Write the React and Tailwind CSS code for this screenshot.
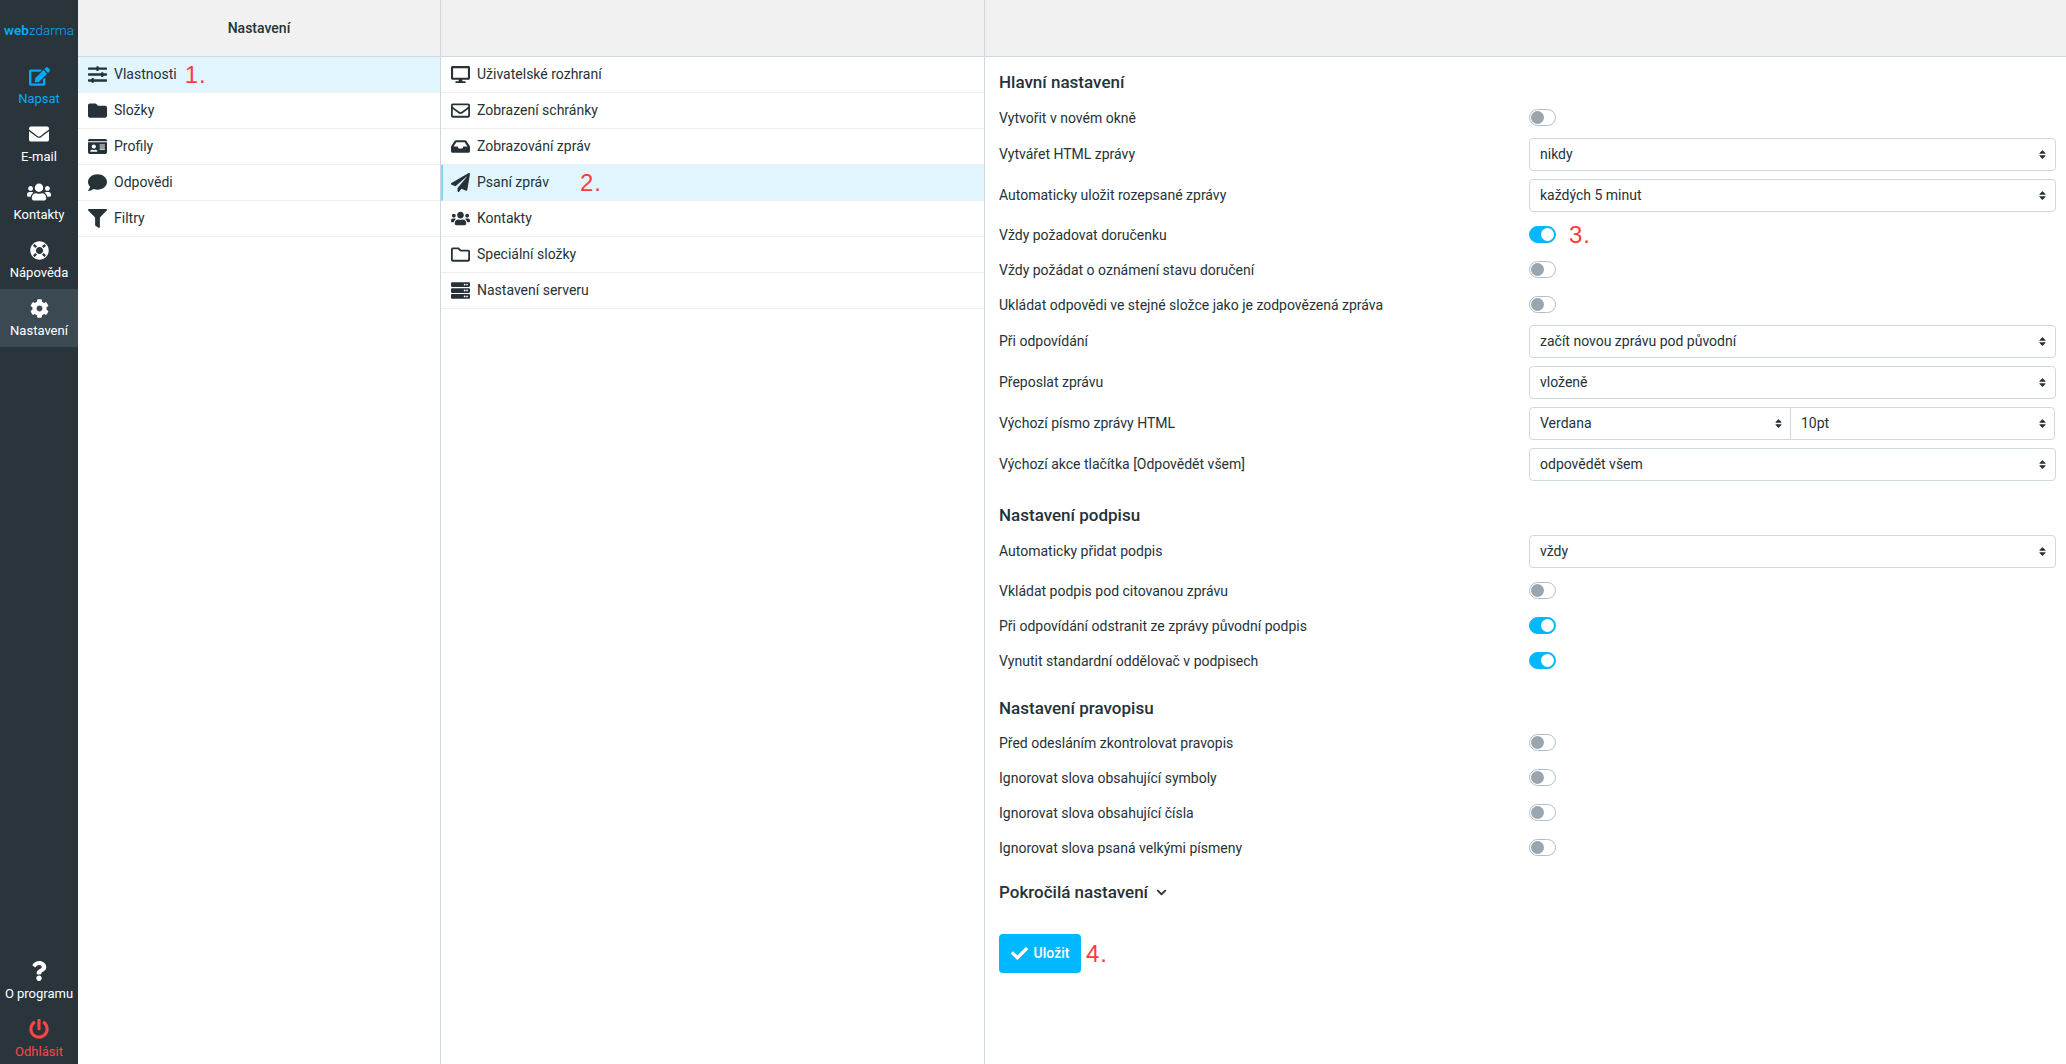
import {
  FaCheck,
  FaChevronDown,
  FaCog,
  FaComment,
  FaDesktop,
  FaEdit,
  FaEnvelope,
  FaFilter,
  FaFolder,
  FaIdCard,
  FaInbox,
  FaLifeRing,
  FaPaperPlane,
  FaPowerOff,
  FaQuestion,
  FaRegEnvelope,
  FaRegFolder,
  FaServer,
  FaSlidersH,
  FaSort,
  FaUsers,
} from "react-icons/fa";

const NavItems = [
  { icon: FaEdit, label: "Napsat", color: "text-[#03a9f4]", size: "text-[21px]" },
  { icon: FaEnvelope, label: "E-mail", size: "text-[20px]" },
  { icon: FaUsers, label: "Kontakty", size: "text-[24px]" },
  { icon: FaLifeRing, label: "Nápověda", size: "text-[19px]" },
  { icon: FaCog, label: "Nastavení", size: "text-[19px]", active: true },
];

const Sections = [
  { icon: FaSlidersH, label: "Vlastnosti", mark: "1.", active: true },
  { icon: FaFolder, label: "Složky" },
  { icon: FaIdCard, label: "Profily" },
  { icon: FaComment, label: "Odpovědi" },
  { icon: FaFilter, label: "Filtry" },
];

const Pages = [
  { icon: FaDesktop, label: "Uživatelské rozhraní" },
  { icon: FaRegEnvelope, label: "Zobrazení schránky" },
  { icon: FaInbox, label: "Zobrazování zpráv" },
  { icon: FaPaperPlane, label: "Psaní zpráv", mark: "2.", active: true },
  { icon: FaUsers, label: "Kontakty" },
  { icon: FaRegFolder, label: "Speciální složky" },
  { icon: FaServer, label: "Nastavení serveru" },
];

function Mark({ children, className = "" }) {
  return (
    <span className={`font-['Liberation_Sans',sans-serif] text-[24px] leading-none tracking-[1px] text-[#ff3b3b] ${className}`}>
      {children}
    </span>
  );
}

function NavItem({ icon: Icon, label, color = "text-white", size = "text-[20px]", active, className = "" }) {
  return (
    <div className={`flex h-[58px] flex-col items-center justify-center ${color} ${active ? "bg-[#3b4a52]" : ""} ${className}`}>
      <div className={`flex h-[26px] items-center ${size}`}>
        <Icon />
      </div>
      <div className="text-[13px] leading-[20px]">{label}</div>
    </div>
  );
}

function ListRow({ icon: Icon, label, mark, active, markClass, accent }) {
  return (
    <div
      className={`flex h-[36px] items-center border-b border-[#eceff1] text-[14px] ${
        active ? "bg-[#e1f5fe]" : ""
      } ${accent && active ? "border-l-2 border-l-[#81d4fa] pl-[7px]" : "pl-[9px]"}`}
    >
      <span className="flex w-[20px] justify-center text-[19px] text-[#263238]">
        <Icon />
      </span>
      <span className="ml-[7px] text-[#263238]">{label}</span>
      {mark && <Mark className={markClass}>{mark}</Mark>}
    </div>
  );
}

function Select({ value, className = "w-full rounded" }) {
  return (
    <div className={`relative ${className}`}>
      <select
        defaultValue={value}
        className={`h-[33px] w-full appearance-none border border-[#cfd8dc] bg-white pl-[10px] text-[14px] text-[#263238] ${className}`}
      >
        <option>{value}</option>
      </select>
      <FaSort className="pointer-events-none absolute top-[11px] right-[8px] text-[11px] text-[#263238]" />
    </div>
  );
}

function Toggle({ on }) {
  return (
    <div
      className={`flex h-[17px] w-[27px] items-center rounded-full border px-[1px] ${
        on ? "justify-end border-[#00b8ff] bg-[#00b8ff]" : "justify-start border-[#b0bec5] bg-white"
      }`}
    >
      <div className={`size-[13px] rounded-full ${on ? "bg-white" : "bg-[#9aa5ae]"}`}></div>
    </div>
  );
}

function Row({ label, children, tall }) {
  return (
    <div className={`flex ${tall ? "h-[41px] items-start pt-[3px]" : "h-[35px] items-center"}`}>
      <div className={`w-[530px] shrink-0 text-[14px] text-[#263238] ${tall ? "pt-[6px]" : "pt-[1px]"}`}>{label}</div>
      {children}
    </div>
  );
}

function ToggleRow({ label, on, mark }) {
  return (
    <Row label={label}>
      <Toggle on={on} />
      {mark && <Mark className="ml-[13px]">{mark}</Mark>}
    </Row>
  );
}

function SelectRow({ label, value }) {
  return (
    <Row label={label} tall>
      <div className="w-[527px]">
        <Select value={value} />
      </div>
    </Row>
  );
}

function Heading({ children, className = "" }) {
  return <h2 className={`text-[17px] leading-[24px] font-medium text-[#263238] ${className}`}>{children}</h2>;
}

export default function App() {
  return (
    <div className="flex h-[1064px] overflow-hidden bg-white font-['Roboto',sans-serif]">
      <aside className="flex w-[78px] shrink-0 flex-col bg-[#2a353b]">
        <div className="flex h-[57px] items-center justify-center pt-[4px] text-[13.5px] text-[#03a9f4]">
          <span className="font-semibold">web</span>
          <span className="font-light">zdarma</span>
        </div>
        {NavItems.map((item) => (
          <NavItem key={item.label} {...item} />
        ))}
        <div className="mt-auto">
          <NavItem icon={FaQuestion} label="O programu" className="pt-[8px]" />
          <NavItem icon={FaPowerOff} label="Odhlásit" color="text-[#ff4444]" className="pt-[8px]" />
        </div>
      </aside>

      <section className="w-[363px] shrink-0 border-r border-[#cfd8dc]">
        <div className="flex h-[57px] items-center justify-center border-b border-[#cfd8dc] bg-[#f1f1f1] text-[14px] font-medium text-[#263238]">
          Nastavení
        </div>
        {Sections.map((row) => (
          <ListRow key={row.label} {...row} markClass="ml-[8px]" />
        ))}
      </section>

      <section className="w-[544px] shrink-0 border-r border-[#cfd8dc]">
        <div className="h-[57px] border-b border-[#cfd8dc] bg-[#f1f1f1]"></div>
        {Pages.map((row) => (
          <ListRow key={row.label} {...row} accent markClass="ml-[31px]" />
        ))}
      </section>

      <main className="flex-1">
        <div className="h-[57px] border-b border-[#cfd8dc] bg-[#f1f1f1]"></div>
        <div className="pt-[13px] pl-[14px]">
          <Heading className="mb-[6px]">Hlavní nastavení</Heading>
          <ToggleRow label="Vytvořit v novém okně" />
          <SelectRow label="Vytvářet HTML zprávy" value="nikdy" />
          <SelectRow label="Automaticky uložit rozepsané zprávy" value="každých 5 minut" />
          <ToggleRow label="Vždy požadovat doručenku" on mark="3." />
          <ToggleRow label="Vždy požádat o oznámení stavu doručení" />
          <ToggleRow label="Ukládat odpovědi ve stejné složce jako je zodpovězená zpráva" />
          <SelectRow label="Při odpovídání" value="začít novou zprávu pod původní" />
          <SelectRow label="Přeposlat zprávu" value="vloženě" />
          <Row label="Výchozí písmo zprávy HTML" tall>
            <div className="flex w-[527px]">
              <Select value="Verdana" className="w-[263px] rounded-l" />
              <Select value="10pt" className="-ml-px flex-1 rounded-r" />
            </div>
          </Row>
          <SelectRow label="Výchozí akce tlačítka [Odpovědět všem]" value="odpovědět všem" />

          <Heading className="mt-[17px] mb-[5px]">Nastavení podpisu</Heading>
          <SelectRow label="Automaticky přidat podpis" value="vždy" />
          <ToggleRow label="Vkládat podpis pod citovanou zprávu" />
          <ToggleRow label="Při odpovídání odstranit ze zprávy původní podpis" on />
          <ToggleRow label="Vynutit standardní oddělovač v podpisech" on />

          <Heading className="mt-[18px] mb-[5px]">Nastavení pravopisu</Heading>
          <ToggleRow label="Před odesláním zkontrolovat pravopis" />
          <ToggleRow label="Ignorovat slova obsahující symboly" />
          <ToggleRow label="Ignorovat slova obsahující čísla" />
          <ToggleRow label="Ignorovat slova psaná velkými písmeny" />

          <Heading className="mt-[15px] flex items-center gap-[8px]">
            Pokročilá nastavení <FaChevronDown className="text-[11px]" />
          </Heading>

          <div className="mt-[30px] flex items-center gap-[5px]">
            <button
              type="button"
              className="flex h-[39px] w-[82px] items-center justify-center gap-[6px] rounded bg-[#00b8ff] text-[14px] font-medium text-white"
            >
              <FaCheck className="text-[17px]" /> Uložit
            </button>
            <Mark>4.</Mark>
          </div>
        </div>
      </main>
    </div>
  );
}
